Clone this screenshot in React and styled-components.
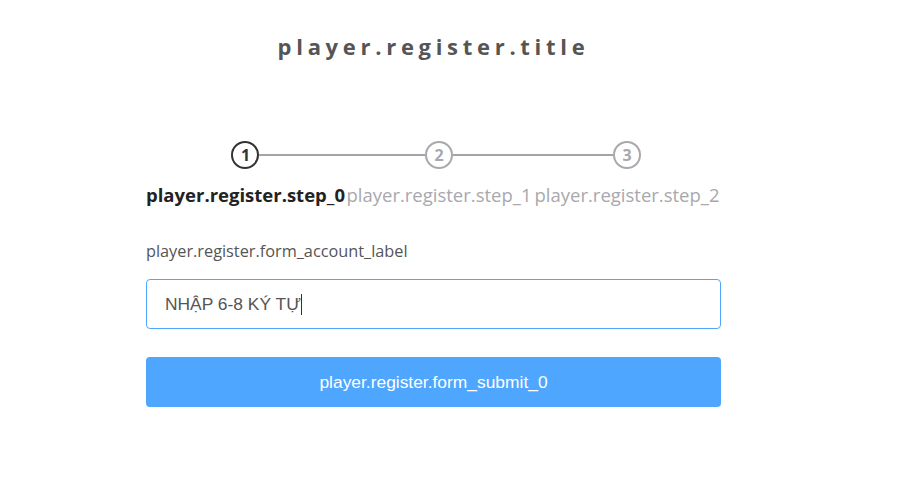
import React from "react";
import styled, { createGlobalStyle } from "styled-components";

const steps = ["player.register.step_0", "player.register.step_1", "player.register.step_2"];

const App = () => {
  const current = 0;

  return (
    <>
      <GlobalStyle />
      <Page>
        <Title>player.register.title</Title>
        <Content>
          <Steps>
            {steps.map((label, i) => (
              <Step key={label}>
                <CircleRow>
                  <Line $hidden={i === 0} />
                  <Circle $active={i === current}>{i + 1}</Circle>
                  <Line $hidden={i === steps.length - 1} />
                </CircleRow>
                <StepLabel $active={i === current}>{label}</StepLabel>
              </Step>
            ))}
          </Steps>
          <Form>
            <FieldLabel>player.register.form_account_label</FieldLabel>
            <Field>
              <FieldText>NHẬP 6-8 KÝ TỰ</FieldText>
              <Caret />
            </Field>
            <SubmitButton type="button">player.register.form_submit_0</SubmitButton>
          </Form>
        </Content>
      </Page>
    </>
  );
};

export default App;

const GlobalStyle = createGlobalStyle`
  body {
    margin: 0;
    background: #ffffff;
    font-family: "Open Sans", "Noto Sans", sans-serif;
  }
`;

const Page = styled.div`
  width: 867px;
  display: flex;
  flex-direction: column;
  align-items: center;
  padding-top: 31px;
`;

const Title = styled.h1`
  margin: 0;
  font-size: 22px;
  font-weight: 700;
  letter-spacing: 4.7px;
  color: #555555;
  line-height: 30px;
`;

const Content = styled.div`
  width: 575px;
  margin-top: 80px;
`;

const Steps = styled.div`
  display: flex;
`;

const Step = styled.div`
  flex: 1;
  display: flex;
  flex-direction: column;
  align-items: center;
`;

const CircleRow = styled.div`
  width: 100%;
  display: flex;
  align-items: center;
`;

const Line = styled.div`
  flex: 1;
  height: 2px;
  background: ${({ $hidden }) => ($hidden ? "transparent" : "#a3a3a8")};
`;

const Circle = styled.div`
  width: 24px;
  height: 24px;
  border-radius: 50%;
  border: 2px solid ${({ $active }) => ($active ? "#333333" : "#a8a8ad")};
  color: ${({ $active }) => ($active ? "#333333" : "#a8a8ad")};
  display: flex;
  justify-content: center;
  align-items: center;
  font-size: 16px;
  font-weight: 700;
`;

const StepLabel = styled.div`
  margin-top: 14px;
  white-space: nowrap;
  font-size: 18.5px;
  line-height: 24px;
  font-weight: ${({ $active }) => ($active ? 700 : 400)};
  color: ${({ $active }) => ($active ? "#222222" : "#a8a8ad")};
`;

const Form = styled.div`
  display: flex;
  flex-direction: column;
  margin-top: 32px;
`;

const FieldLabel = styled.label`
  font-size: 16.3px;
  line-height: 24px;
  color: #555555;
`;

const Field = styled.div`
  margin-top: 16px;
  height: 50px;
  box-sizing: border-box;
  border: 1px solid #4ea6ff;
  border-radius: 4px;
  display: flex;
  align-items: center;
  padding: 0 18px;
  font-family: "Liberation Sans", Arial, sans-serif;
  font-size: 17.4px;
  color: #555555;
`;

const FieldText = styled.span``;

const Caret = styled.span`
  width: 1px;
  height: 21px;
  background: #333333;
`;

const SubmitButton = styled.button`
  margin-top: 28px;
  height: 50px;
  border: none;
  border-radius: 4px;
  background: #4ea6ff;
  color: #ffffff;
  font-family: "Liberation Sans", Arial, sans-serif;
  font-size: 17.4px;
  cursor: pointer;
`;
